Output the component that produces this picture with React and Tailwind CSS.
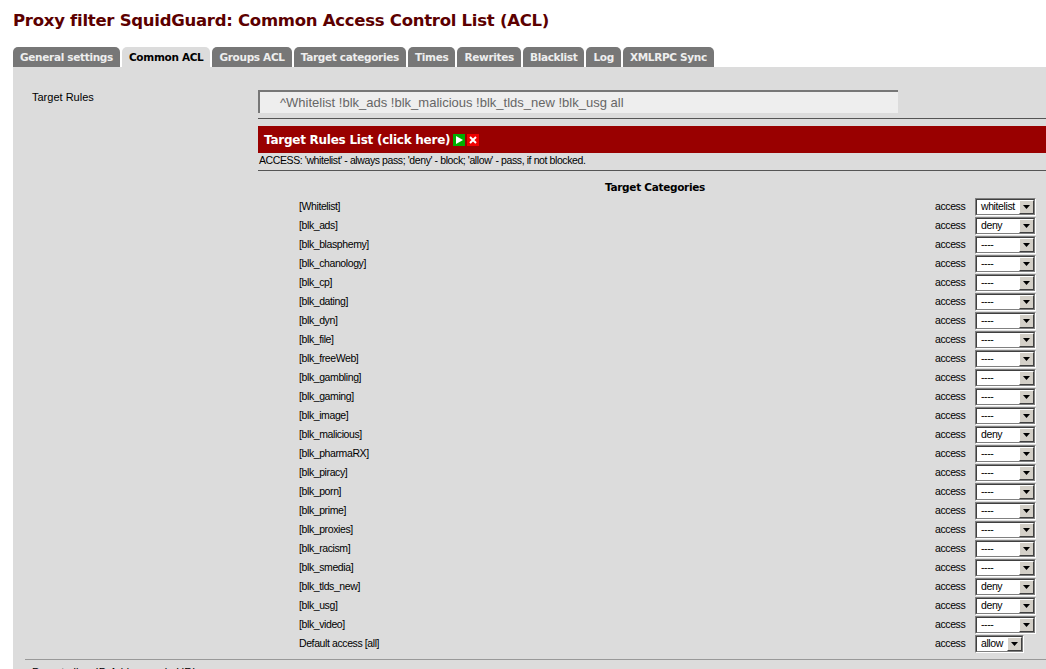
const tabs = ['General settings', 'Common ACL', 'Groups ACL', 'Target categories', 'Times', 'Rewrites', 'Blacklist', 'Log', 'XMLRPC Sync'];

const rows = [
  ['[Whitelist]', 'whitelist'],
  ['[blk_ads]', 'deny'],
  ['[blk_blasphemy]', '----'],
  ['[blk_chanology]', '----'],
  ['[blk_cp]', '----'],
  ['[blk_dating]', '----'],
  ['[blk_dyn]', '----'],
  ['[blk_file]', '----'],
  ['[blk_freeWeb]', '----'],
  ['[blk_gambling]', '----'],
  ['[blk_gaming]', '----'],
  ['[blk_image]', '----'],
  ['[blk_malicious]', 'deny'],
  ['[blk_pharmaRX]', '----'],
  ['[blk_piracy]', '----'],
  ['[blk_porn]', '----'],
  ['[blk_prime]', '----'],
  ['[blk_proxies]', '----'],
  ['[blk_racism]', '----'],
  ['[blk_smedia]', '----'],
  ['[blk_tlds_new]', 'deny'],
  ['[blk_usg]', 'deny'],
  ['[blk_video]', '----'],
];

function AccessSelect({ value, narrow }) {
  return (
    <div className={`h-[18px] border border-t-[#808080] border-l-[#808080] border-b-white border-r-white ${narrow ? 'w-[49px]' : 'w-[61px]'}`}>
      <div className="h-[16px] flex border border-t-[#404040] border-l-[#404040] border-b-[#808080] border-r-[#808080] bg-white">
        <span className="flex-1 pl-[4px] text-[10.5px] leading-[13px] text-black">{value}</span>
        <span className="w-[15px] h-[14px] bg-[#d4d0c8] border border-t-white border-l-white border-b-[#404040] border-r-[#404040] flex items-center justify-center">
          <svg width="7" height="4" viewBox="0 0 7 4">
            <path d="M0 0h7L3.5 4z" fill="#000" />
          </svg>
        </span>
      </div>
    </div>
  );
}

function Row({ name, value, narrow }) {
  return (
    <div className="h-[19px] flex items-center">
      <span className="ml-[41px] flex-1">{name}</span>
      <span className="w-[40px]">access</span>
      <div className="w-[71px]">
        <AccessSelect value={value} narrow={narrow} />
      </div>
    </div>
  );
}

export default function App() {
  return (
    <div className="w-[1046px] h-[669px] overflow-hidden bg-white font-['Liberation_Sans',sans-serif] text-[10.5px] tracking-[-0.4px] text-black">
      <h1 className="pl-[13px] pt-[9px] h-[47px] font-['DejaVu_Sans',sans-serif] font-bold text-[16.5px] tracking-[-0.27px] leading-[24px] text-[#5c0000]">
        Proxy filter SquidGuard: Common Access Control List (ACL)
      </h1>
      <div className="flex gap-[2px] pl-[13px] h-[20px] font-['DejaVu_Sans',sans-serif] font-bold text-[10.5px] tracking-[-0.32px] leading-[20px]">
        {tabs.map((t) => (
          <div
            key={t}
            className={`px-[7px] rounded-t-[5px] ${t === 'Common ACL' ? 'bg-[#dcdcdc] text-black' : 'bg-[#777] text-[#eee]'}`}
          >
            {t}
          </div>
        ))}
      </div>
      <div className="ml-[13px] bg-[#dcdcdc] h-[602px] overflow-hidden">
        <div className="flex">
          <div className="w-[245px] shrink-0 pl-[19px] pt-[23px] text-[11px] tracking-normal leading-[14px]">Target Rules</div>
          <div className="flex-1 pt-[23px]">
            <div className="w-[640px] h-[23px] bg-[#eee] border-l-2 border-t-2 border-[#777] pl-[20px] text-[13px] tracking-normal leading-[21px] text-[#666]">
              ^Whitelist !blk_ads !blk_malicious !blk_tlds_new !blk_usg all
            </div>
            <div className="h-[1px] mt-[5px] bg-[#555]" />
            <div className="h-[27px] mt-[7px] bg-[#990000] flex items-center pl-[6px] font-['DejaVu_Sans',sans-serif] font-bold text-[12px] tracking-[-0.25px] text-white">
              <span>Target Rules List (click here)</span>
              <svg width="12" height="12" viewBox="0 0 12 12" className="ml-[3px]">
                <rect width="12" height="12" fill="#00b000" />
                <path d="M3 2l7 4-7 4z" fill="#fff" />
              </svg>
              <svg width="12" height="12" viewBox="0 0 12 12" className="ml-[2px]">
                <rect width="12" height="12" fill="#f00000" />
                <path d="M3 3l6 6M9 3l-6 6" stroke="#fff" strokeWidth="2" />
              </svg>
            </div>
            <div className="h-[18px] pl-[1px] leading-[15px] border-b border-[#555]">
              ACCESS: 'whitelist' - always pass; 'deny' - block; 'allow' - pass, if not blocked.
            </div>
            <div className="h-[26px] pt-[8px] text-center font-['DejaVu_Sans',sans-serif] font-bold text-[10.5px] tracking-[-0.3px] leading-[16px] pl-[6px]">Target Categories</div>
            {rows.map(([name, value]) => (
              <Row key={name} name={name} value={value} />
            ))}
            <Row name="Default access [all]" value="allow" narrow />
          </div>
        </div>
        <div className="ml-[12px] mt-[6px] h-[1px] bg-[#999]" />
        <div className="pl-[19px] pt-[5px] text-[11px] tracking-normal leading-[14px]">Do not allow IP-Addresses in URL</div>
      </div>
    </div>
  );
}
